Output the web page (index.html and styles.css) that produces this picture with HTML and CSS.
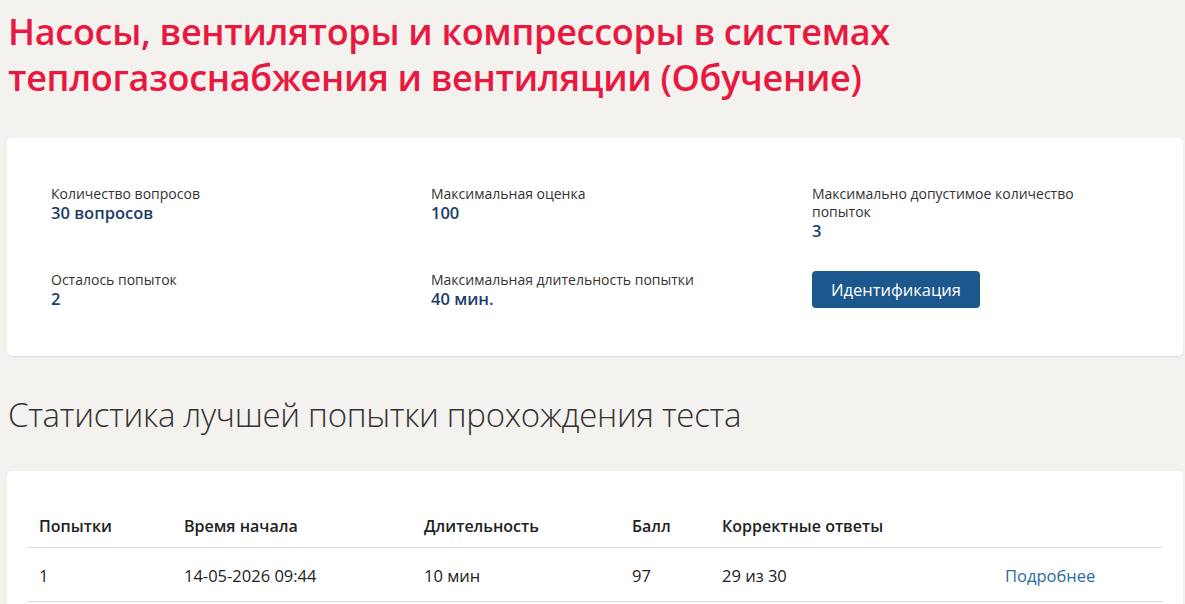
FILE: index.html
```html
<!DOCTYPE html>
<html lang="ru">
<head>
<meta charset="utf-8">
<link rel="stylesheet" href="styles.css">
</head>
<body>
<div class="page">
  <h1 class="title">Насосы, вентиляторы и компрессоры в системах теплогазоснабжения и вентиляции (Обучение)</h1>
  <div class="card info">
    <div class="grid">
      <div class="item">
        <div class="label">Количество вопросов</div>
        <div class="value">30 вопросов</div>
      </div>
      <div class="item">
        <div class="label">Максимальная оценка</div>
        <div class="value">100</div>
      </div>
      <div class="item">
        <div class="label">Максимально допустимое количество попыток</div>
        <div class="value">3</div>
      </div>
      <div class="item">
        <div class="label">Осталось попыток</div>
        <div class="value">2</div>
      </div>
      <div class="item">
        <div class="label">Максимальная длительность попытки</div>
        <div class="value">40 мин.</div>
      </div>
      <div class="item">
        <button class="btn">Идентификация</button>
      </div>
    </div>
  </div>
  <h2 class="subtitle">Статистика лучшей попытки прохождения теста</h2>
  <div class="card stats">
    <table class="table">
      <thead>
        <tr>
          <th class="c1">Попытки</th>
          <th class="c2">Время начала</th>
          <th class="c3">Длительность</th>
          <th class="c4">Балл</th>
          <th class="c5">Корректные ответы</th>
          <th class="c6"></th>
        </tr>
      </thead>
      <tbody>
        <tr>
          <td>1</td>
          <td>14-05-2026 09:44</td>
          <td>10 мин</td>
          <td>97</td>
          <td>29 из 30</td>
          <td><a class="link" href="#">Подробнее</a></td>
        </tr>
      </tbody>
    </table>
  </div>
</div>
</body>
</html>
```
FILE: styles.css
```css
* { box-sizing: border-box; }
html, body { margin: 0; padding: 0; }
body {
  background: #f3f2ef;
  font-family: "Open Sans", "Liberation Sans", sans-serif;
  color: #222;
  overflow: hidden;
}
.page {
  padding: 0 2px 0 7px;
}
.title {
  margin: 0;
  padding: 9px 0 0 1px;
  font-family: "Open Sans", sans-serif;
  font-weight: 600;
  font-size: 36px;
  line-height: 46px;
  color: #e8183f;
  max-width: 960px;
  letter-spacing: -0.3px;
}
.card {
  background: #fff;
  border-radius: 5px;
  box-shadow: 0 1px 1px rgba(0,0,0,0.08);
}
.info {
  margin-top: 37px;
  height: 218px;
  padding: 47px 44px 0 44px;
}
.grid {
  display: grid;
  grid-template-columns: 380px 381px 1fr;
  row-gap: 20px;
}
.item {
  min-height: 66px;
}
.label {
  font-size: 14px;
  line-height: 18px;
  color: #333;
  max-width: 300px;
}
.value {
  font-size: 16.5px;
  line-height: 20px;
  font-weight: 600;
  color: #1b3d68;
}
.btn {
  margin-top: 0;
  width: 168px;
  height: 37px;
  border: 0;
  border-radius: 4px;
  background: #1c578e;
  color: #fff;
  font-family: "Open Sans", sans-serif;
  font-size: 16.5px;
  padding: 0;
}
.subtitle {
  margin: 0;
  padding: 37px 0 0 1px;
  font-family: "Open Sans", sans-serif;
  font-weight: 300;
  font-size: 33px;
  line-height: 44px;
  color: #333;
  letter-spacing: -0.3px;
}
.stats {
  margin-top: 34px;
  padding: 34px 20px 0 20px;
  height: 200px;
}
.table {
  width: 100%;
  border-collapse: collapse;
  font-size: 16.5px;
}
.table th {
  text-align: left;
  font-weight: 600;
  font-size: 16px;
  color: #222;
  height: 42px;
  padding: 0 12px;
  vertical-align: middle;
  border-bottom: 1px solid #dedede;
}
.table td {
  text-align: left;
  height: 54px;
  padding: 3px 12px 0 12px;
  color: #222;
  border-bottom: 1px solid #dedede;
}
.c1 { width: 145px; }
.c2 { width: 240px; }
.c3 { width: 208px; }
.c4 { width: 90px; }
.c5 { width: 283px; }
.link {
  color: #2c6aa0;
  text-decoration: none;
}
```
